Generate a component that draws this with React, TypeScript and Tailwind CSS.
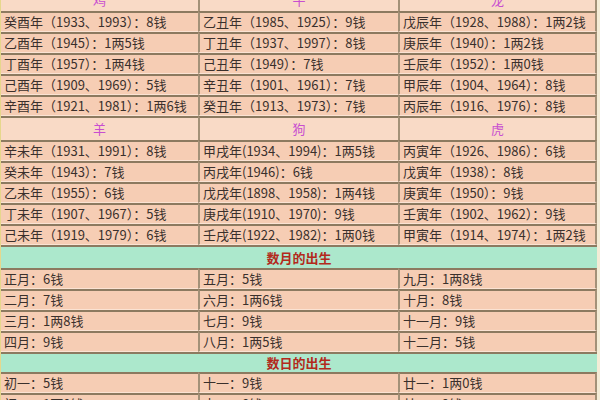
import React from 'react';

type Row =
  | { kind: 'data'; cells: string[] }
  | { kind: 'animal'; cells: string[] }
  | { kind: 'section'; title: string };

const rows: Row[] = [
  { kind: 'data', cells: ['癸酉年（1933、1993）：8钱', '乙丑年（1985、1925）：9钱', '戊辰年（1928、1988）：1两2钱'] },
  { kind: 'data', cells: ['乙酉年（1945）：1两5钱', '丁丑年（1937、1997）：8钱', '庚辰年（1940）：1两2钱'] },
  { kind: 'data', cells: ['丁酉年（1957）：1两4钱', '己丑年（1949）：7钱', '壬辰年（1952）：1两0钱'] },
  { kind: 'data', cells: ['己酉年（1909、1969）：5钱', '辛丑年（1901、1961）：7钱', '甲辰年（1904、1964）：8钱'] },
  { kind: 'data', cells: ['辛酉年（1921、1981）：1两6钱', '癸丑年（1913、1973）：7钱', '丙辰年（1916、1976）：8钱'] },
  { kind: 'animal', cells: ['羊', '狗', '虎'] },
  { kind: 'data', cells: ['辛未年（1931、1991）：8钱', '甲戌年(1934、1994)：1两5钱', '丙寅年（1926、1986）：6钱'] },
  { kind: 'data', cells: ['癸未年（1943）：7钱', '丙戌年(1946)：6钱', '戊寅年（1938）：8钱'] },
  { kind: 'data', cells: ['乙未年（1955）：6钱', '戊戌年(1898、1958)：1两4钱', '庚寅年（1950）：9钱'] },
  { kind: 'data', cells: ['丁未年（1907、1967）：5钱', '庚戌年(1910、1970)：9钱', '壬寅年（1902、1962）：9钱'] },
  { kind: 'data', cells: ['己未年（1919、1979）：6钱', '壬戌年(1922、1982)：1两0钱', '甲寅年（1914、1974）：1两2钱'] },
  { kind: 'section', title: '数月的出生' },
  { kind: 'data', cells: ['正月：6钱', '五月：5钱', '九月：1两8钱'] },
  { kind: 'data', cells: ['二月：7钱', '六月：1两6钱', '十月：8钱'] },
  { kind: 'data', cells: ['三月：1两8钱', '七月：9钱', '十一月：9钱'] },
  { kind: 'data', cells: ['四月：9钱', '八月：1两5钱', '十二月：5钱'] },
  { kind: 'section', title: '数日的出生' },
  { kind: 'data', cells: ['初一：5钱', '十一：9钱', '廿一：1两0钱'] },
  { kind: 'data', cells: ['初二：1两0钱', '十二：8钱', '廿二：9钱'] },
];

const cols = 'grid grid-cols-[197px_200px_199px]';

function DataRow({ cells }: { cells: string[] }) {
  return (
    <div className={cols}>
      {cells.map((c, i) => (
        <div
          key={i}
          className={`h-[21px] flex items-center pl-[3px] bg-[#f6cdb4] border-t-2 border-t-[#8c7a60] border-b border-b-[#fbe3d3] ${i > 0 ? 'border-l-2 border-l-[#a39178]' : ''} ${i === 2 ? 'border-r-2 border-r-[#a39178]' : ''} text-[13px] text-[#3a302c] whitespace-nowrap overflow-hidden`}
        >
          {c}
        </div>
      ))}
    </div>
  );
}

function AnimalRow({ cells, first }: { cells: string[]; first?: boolean }) {
  return (
    <div className={`${cols} ${first ? '-mt-[13px]' : ''}`}>
      {cells.map((c, i) => (
        <div
          key={i}
          className={`h-[24px] flex items-center justify-center bg-[#f9dac6] border-t-2 border-t-[#8c7a60] ${i > 0 ? 'border-l-2 border-l-[#a39178]' : ''} ${i === 2 ? 'border-r-2 border-r-[#a39178]' : ''} text-[13px] text-[#c84ed0]`}
        >
          {c}
        </div>
      ))}
    </div>
  );
}

function SectionRow({ title, h }: { title: string; h: string }) {
  return (
    <div className={`w-[596px] ${h} flex items-center justify-center bg-[#ace8cc] border-t-2 border-t-[#8c7a60] text-[13px] font-bold text-[#b32a1c]`}>
      {title}
    </div>
  );
}

export default function App() {
  let sectionCount = 0;
  return (
    <div
      className="w-[600px] h-[400px] overflow-hidden bg-[#f4ecd6] border-l border-l-[#e6d78c]"
      style={{ fontFamily: '"Noto Sans CJK SC", "Noto Sans", sans-serif' }}
    >
      <AnimalRow cells={['鸡', '牛', '龙']} first />
      {rows.map((r, i) => {
        if (r.kind === 'data') return <DataRow key={i} cells={r.cells} />;
        if (r.kind === 'animal') return <AnimalRow key={i} cells={r.cells} />;
        sectionCount += 1;
        return <SectionRow key={i} title={r.title} h={sectionCount === 1 ? 'h-[23px]' : 'h-[20px]'} />;
      })}
    </div>
  );
}
